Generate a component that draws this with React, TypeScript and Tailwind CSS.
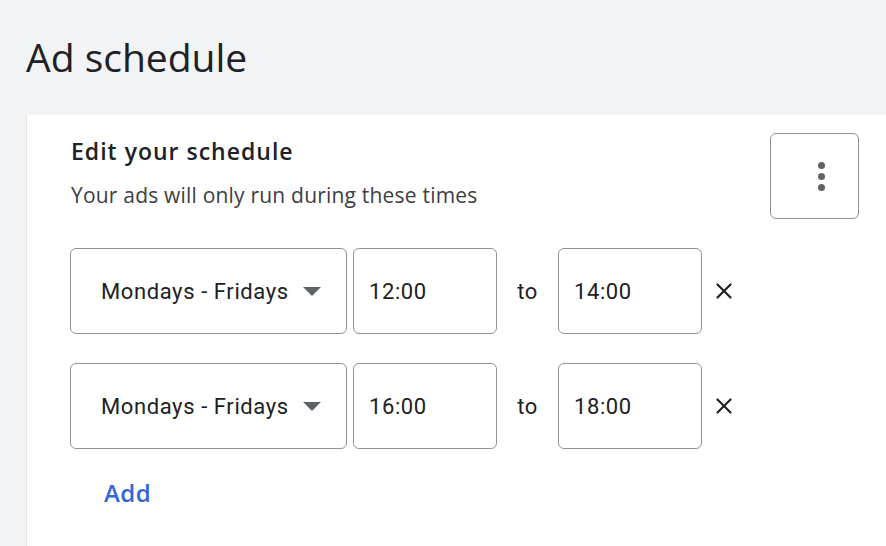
import { X } from "lucide-react";

const rows = [
  { days: "Mondays - Fridays", from: "12:00", to: "14:00" },
  { days: "Mondays - Fridays", from: "16:00", to: "18:00" },
];

function Box({ className = "", children }: { className?: string; children: React.ReactNode }) {
  return (
    <div className={`flex h-[86px] items-center rounded-[6px] border border-[#8f9397] ${className}`}>
      {children}
    </div>
  );
}

function App() {
  return (
    <div className="flex h-[546px] w-full flex-col overflow-hidden bg-[#f1f3f4] font-['Roboto',sans-serif]">
      <h1 className="h-[115px] pl-[26px] pt-[33px] font-['Open_Sans',sans-serif] text-[39px] leading-[48px] text-[#202124]">
        Ad schedule
      </h1>
      <div className="ml-[26px] flex flex-1 border-l border-[#e3e5e8] bg-white pl-[43px] pr-[27px]">
        <div className="flex-1 pt-[21px]">
          <h2 className="pl-[1px] font-['Open_Sans',sans-serif] text-[23px] font-semibold leading-[30px] tracking-[1px] text-[#202124]">
            Edit your schedule
          </h2>
          <p className="mt-[15px] pl-[1px] font-['Open_Sans',sans-serif] text-[21px] leading-[28px] tracking-[0.2px] text-[#3c4043]">
            Your ads will only run during these times
          </p>
          <div className="mt-[39px] flex flex-col gap-[29px]">
            {rows.map((r, i) => (
              <div key={i} className="flex items-center tracking-[0.6px]">
                <Box className="w-[277px] pl-[30px] pr-[25px]">
                  <span className="flex-1 text-[22px] text-[#202124]">{r.days}</span>
                  <svg width="18" height="9" viewBox="0 0 18 9" className="mt-[1px]">
                    <path d="M0 0h18L9 9z" fill="#5f6368" />
                  </svg>
                </Box>
                <Box className="ml-[6px] w-[144px] pl-[15px]">
                  <span className="text-[22px] text-[#202124]">{r.from}</span>
                </Box>
                <span className="w-[61px] text-center text-[22px] text-[#202124]">to</span>
                <Box className="w-[144px] pl-[15px]">
                  <span className="text-[22px] text-[#202124]">{r.to}</span>
                </Box>
                <X className="ml-[9px]" size={26} strokeWidth={2} color="#202124" />
              </div>
            ))}
          </div>
          <button className="ml-[34px] mt-[26px] font-['Open_Sans',sans-serif] text-[24px] font-semibold tracking-[0.5px] text-[#3367d6]">
            Add
          </button>
        </div>
        <div className="pt-[18px]">
          <div className="flex h-[86px] w-[89px] flex-col items-center justify-center gap-[4px] rounded-[6px] border border-[#8f9397] pl-[13px]">
            <span className="h-[7px] w-[7px] rounded-full bg-[#5f6368]" />
            <span className="h-[7px] w-[7px] rounded-full bg-[#5f6368]" />
            <span className="h-[7px] w-[7px] rounded-full bg-[#5f6368]" />
          </div>
        </div>
      </div>
    </div>
  );
}

export default App;
